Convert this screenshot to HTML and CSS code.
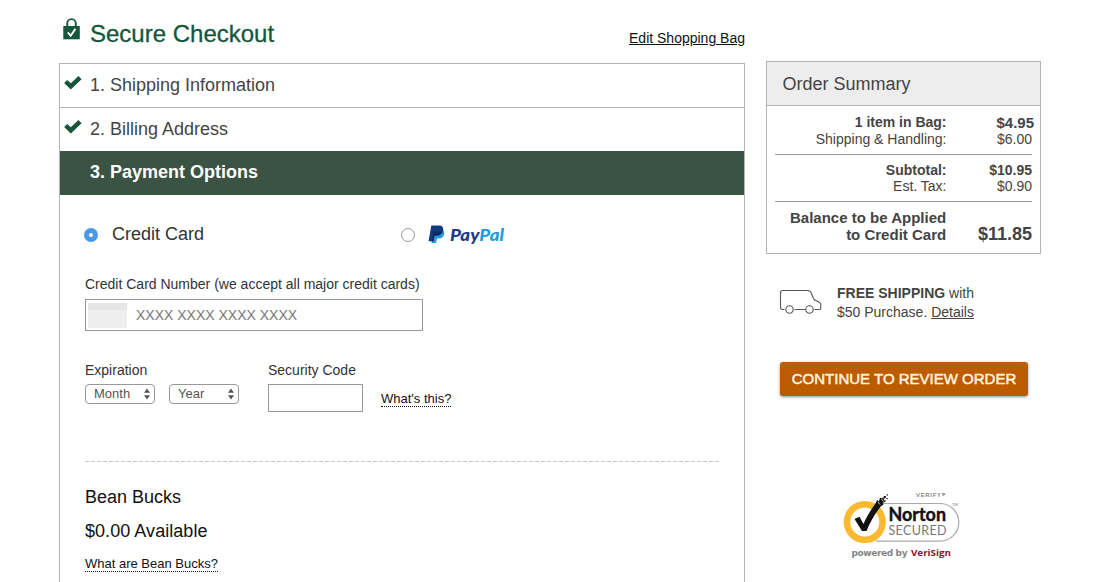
FILE: index.html
```html
<!DOCTYPE html>
<html lang="en">
<head>
<meta charset="utf-8">
<title>Secure Checkout</title>
<link rel="stylesheet" href="styles.css">
</head>
<body>
<div class="page">
  <main class="checkout">
    <header class="top">
      <svg class="lock" width="18" height="22" viewBox="0 0 18 22">
        <path d="M4.200 9V5.500a4.300 4.400 0 0 1 8.600 0V9" fill="none" stroke="#14573b" stroke-width="1.900"/>
        <path d="M.300 8h16.500v13.300H.300z" fill="#14573b"/>
        <path d="M4.800 14.300l2.900 3.400 4.700-6.800" fill="none" stroke="#fff" stroke-width="1.900"/>
      </svg>
      <h1>Secure Checkout</h1>
      <a class="edit">Edit Shopping Bag</a>
    </header>
    <section class="steps">
      <div class="step">
        <svg class="check" width="18" height="15" viewBox="0 0 18 15"><path d="M1.700 6.500l5.100 4.900L16 2.700" fill="none" stroke="#14573b" stroke-width="4.500"/></svg>
        <h2>1. Shipping Information</h2>
      </div>
      <div class="step last">
        <svg class="check" width="18" height="15" viewBox="0 0 18 15"><path d="M1.700 6.500l5.100 4.900L16 2.700" fill="none" stroke="#14573b" stroke-width="4.500"/></svg>
        <h2>2. Billing Address</h2>
      </div>
      <div class="step active"><h2>3. Payment Options</h2></div>
      <div class="payment">
        <div class="methods">
          <label class="method card"><span class="radio on"></span>Credit Card</label>
          <label class="method"><span class="radio"></span>
            <svg class="paypal" width="80" height="22" viewBox="0 0 80 22">
              <path d="M5.200 5.500h8.300c2.700.8 3.200 2.800 2.600 5-.7 2.800-2.600 4-5.400 4H9l-.9 4.600H3.500z" fill="#259bd7"/>
              <path d="M3.300 1.500h7.500c3.400 0 5 2 4.300 5.100-.7 3.500-3 4.900-6.300 4.900H6.600l-1.200 5.800H.500z" fill="#123a82"/>
              <path d="M5.800 7.500h8.700c-1 2.800-3 4-5.700 4H6.600l-1.200 5.800H3.800z" fill="#0b2567"/>
              <text x="22" y="17" class="pp-text" textLength="54" lengthAdjust="spacingAndGlyphs"><tspan fill="#1b3c87">Pay</tspan><tspan fill="#239bd8">Pal</tspan></text>
            </svg>
          </label>
        </div>
        <div class="label">Credit Card Number (we accept all major credit cards)</div>
        <div class="number"><span class="thumb"></span><span>XXXX XXXX XXXX XXXX</span></div>
        <div class="details">
          <div class="expiration">
            <div class="label">Expiration</div>
            <div class="selects">
              <div class="select">Month<svg width="8" height="12" viewBox="0 0 8 12"><path d="M4 .5l3 4.300H1zM4 11.500L1 7.200h6z" fill="#555"/></svg></div>
              <div class="select">Year<svg width="8" height="12" viewBox="0 0 8 12"><path d="M4 .5l3 4.300H1zM4 11.500L1 7.200h6z" fill="#555"/></svg></div>
            </div>
          </div>
          <div class="security">
            <div class="label">Security Code</div>
            <div class="code"></div>
          </div>
          <a class="help">What's this?</a>
        </div>
        <svg class="rule" width="634" height="1"><path d="M0 .5h634" stroke="#c6c6c6" stroke-dasharray="4 2"/></svg>
        <div class="bucks">Bean Bucks</div>
        <div class="bucks available">$0.00 Available</div>
        <a class="help about">What are Bean Bucks?</a>
      </div>
    </section>
  </main>
  <aside class="side">
    <section class="summary">
      <h2>Order Summary</h2>
      <div class="lines">
        <div class="line strong first"><span>1 item in Bag:</span><span class="big">$4.95</span></div>
        <div class="line"><span>Shipping &amp; Handling:</span><span>$6.00</span></div>
      </div>
      <div class="lines totals">
        <div class="line strong"><span>Subtotal:</span><span>$10.95</span></div>
        <div class="line"><span>Est. Tax:</span><span>$0.90</span></div>
      </div>
      <div class="balance"><span>Balance to be Applied<br>to Credit Card</span><span class="amount">$11.85</span></div>
    </section>
    <div class="shipping">
      <svg width="44" height="26" viewBox="0 0 44 26" fill="none" stroke="#555" stroke-width="1.100">
        <path d="M5.500 20.500H3.500Q1.500 20.500 1.500 18V4Q1.500 1.500 4 1.500H28.500Q31 1.500 32 3.500L34.500 9.500Q35.200 11 36.700 11.600L39.500 12.800Q42 14 42 16.500Q41 18.500 41.800 19.500Q41.500 20.500 40 20.500H35.500M15.500 20.500H26.500"/>
        <circle cx="10.500" cy="20.500" r="3.700"/><circle cx="30.500" cy="20.500" r="3.700"/>
      </svg>
      <p><b>FREE SHIPPING</b> with<br>$50 Purchase. <a>Details</a></p>
    </div>
    <div class="continue">CONTINUE TO REVIEW ORDER</div>
    <svg class="norton" width="118" height="74" viewBox="0 0 118 74">
      <path d="M34 15.500H98a18.800 18.800 0 0 1 0 37.600H34" fill="none" stroke="#a9a9a9" stroke-width="1.200"/>
      <circle cx="22.800" cy="34" r="17.800" fill="#fff" stroke="#fbb92f" stroke-width="6.600"/>
      <path d="M12.500 31l5-2.200 4 7.200C25 28 29 21.500 33.500 15.500l8-.5C34 24 28.500 33 24.500 43h-4.500z" fill="#111"/>
      <path d="M33 17l2-5 2 1.500 1-4 2 1 1.500-2 2.500 1-2.500 2.500 3 1-4 2 1 2-3 1z" fill="#111"/>
      <path d="M36 14l2 2.500M39.500 11l2 2.500M41 9.500l1.500 1" stroke="#fff" stroke-width=".8"/>
      <path d="M42 8h1.800v1.800H42zM44.700 6.200h1.300v1.300h-1.300zM44.500 10h1.200v1.200h-1.200z" fill="#111"/>
      <text x="74" y="8.500" class="verify" textLength="25">VERIFY</text>
      <path d="M100.500 4.500l3.500 1.700-3.500 1.800z" fill="#888"/>
      <text x="46.500" y="33" class="nt-name" textLength="57.500" lengthAdjust="spacingAndGlyphs">Norton</text>
      <text x="46.500" y="47" class="nt-secured" textLength="58">SECURED</text>
      <text x="110" y="18" class="tm">TM</text>
      <text x="9.500" y="67.500" class="powered" textLength="56">powered by</text>
      <text x="69" y="67.500" class="verisign" textLength="40" lengthAdjust="spacingAndGlyphs">VeriSign</text>
    </svg>
  </aside>
</div>
</body>
</html>
```
FILE: styles.css
```css
* { box-sizing: border-box; }
body {
  margin: 0;
  background: #fff;
  color: #444;
  font: 14px/17px "Liberation Sans", Arial, sans-serif;
}
h1, h2, p { margin: 0; font-weight: normal; }
.page { display: flex; gap: 21px; height: 582px; padding-left: 59px; overflow: hidden; }
.checkout { width: 686px; }
.top { display: flex; height: 63px; padding: 18px 0 0 4px; }
.lock { width: 18px; height: 22px; }
h1 { margin-left: 9px; font-size: 24px; line-height: 31px; color: #14573b; -webkit-text-stroke: .3px #14573b; }
.edit { margin: 12px 0 0 auto; height: 17px; color: #111; text-decoration: underline; }
.steps { height: 560px; border: 1px solid #b4b4b4; }
.step { display: flex; height: 44px; padding-left: 4px; border-bottom: 1px solid #b4b4b4; }
.step.last { height: 43px; border: 0; }
.step.active { padding-left: 30px; border: 0; background: #3b5343; color: #fff; }
.step h2 { font-size: 18px; line-height: 42px; }
.step.active h2 { font-weight: bold; }
.check { margin: 11px 8px 0 0; }
.payment { padding: 0 25px; color: #333; }
.methods { display: flex; height: 80px; }
.method { display: flex; align-items: center; height: 79px; font-size: 18px; }
.card { width: 316px; }
.radio { width: 14px; height: 14px; margin-right: 13px; border: 1px solid #999; border-radius: 50%; background: #fff; }
.radio.on { margin: 0 14px 0 -1px; border: 5px solid #4b98e7; }
.paypal { margin-top: 1px; }
.pp-text { font: italic 900 16px "Lato", sans-serif; }
.label { height: 17px; line-height: 17px; }
.methods + .label { margin-top: 1px; }
.number { display: flex; align-items: center; width: 338px; height: 32px; margin-top: 6px; padding-left: 2px; border: 1px solid #999; color: #777; }
.thumb { width: 39px; height: 25px; margin-right: 9px; border-top: 7px solid #e5e5e5; background: #eee; }
.details { display: flex; margin-top: 31px; height: 99px; }
.expiration { width: 183px; }
.selects { display: flex; gap: 14px; margin-top: 5px; }
.select { display: flex; justify-content: space-between; align-items: center; width: 70px; height: 20px; padding: 0 3px 0 8px; border: 1px solid #999; border-radius: 4px; font-size: 13px; line-height: 18px; color: #555; }
.security { width: 113px; }
.code { width: 95px; height: 28px; margin-top: 5px; border: 1px solid #999; }
.help { display: inline-block; height: 17px; font-size: 13px; line-height: 18px; color: #111; border-bottom: 1px dotted #111; }
.details .help { margin-top: 28px; }
.rule { display: block; }
.bucks { height: 34px; font-size: 18px; line-height: 34px; color: #111; }
.available { letter-spacing: .05px; }
.rule + .bucks { margin-top: 18px; }
.about { margin-top: 7px; }
.side { width: 275px; padding-top: 61px; }
.summary { height: 193px; border: 1px solid #b4b4b4; }
.summary h2 { height: 44px; padding-left: 15.500px; border-bottom: 1px solid #b4b4b4; background: #ededed; font-size: 18px; line-height: 44px; }
.lines { height: 49px; margin: 0 8px; padding-top: 8px; border-bottom: 1px solid #999; }
.lines.totals { height: 47px; padding-top: 7px; }
.line { display: grid; grid-template-columns: 171.500px 1fr; text-align: right; line-height: 17px; }
.totals .line { line-height: 16px; }
.strong { font-weight: bold; }
.big { margin-right: -2px; font-size: 15px; }
.balance { display: flex; justify-content: space-between; align-items: flex-end; margin: 7px 8px 0; padding-left: 15px; font-weight: bold; font-size: 15px; line-height: 17px; text-align: right; }
.amount { font-size: 18px; line-height: 17px; }
.shipping { display: flex; height: 38px; margin-top: 30px; padding-left: 13px; line-height: 19px; }
.shipping svg { margin: 5px 14px 0 0; }
.shipping a { text-decoration: underline; }
.continue { width: 248px; height: 34px; margin: 40px 0 0 14px; border-radius: 3px; background: #bc5b00; color: #fff4df; font-size: 15px; line-height: 34px; text-align: center; box-shadow: 0 1px 3px rgba(0, 0, 0, .45); -webkit-text-stroke: .5px #fff4df; }
.norton { display: block; margin: 92px 0 0 76px; overflow: visible; }
.verify { font: bold 6px "Liberation Sans", sans-serif; fill: #888; }
.nt-name { font: bold 18px "Lato", sans-serif; fill: #111; stroke: #111; stroke-width: .4px; }
.nt-secured { font: 12.500px "Lato", sans-serif; fill: #777; }
.tm { font: 4px "Liberation Sans", sans-serif; fill: #777; }
.powered { font: bold 9px "DejaVu Sans", sans-serif; fill: #858585; }
.verisign { font: bold 9.500px "Open Sans", sans-serif; fill: #8e1236; }
```
